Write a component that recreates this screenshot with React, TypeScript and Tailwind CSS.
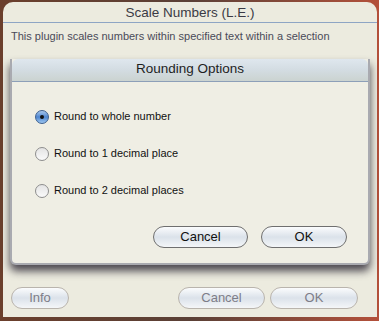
import React, { useState } from "react";

const font = { fontFamily: '"Lucida Grande", "Liberation Sans", Arial, sans-serif' };

function AquaButton({ label, width, disabled }: { label: string; width: string; disabled?: boolean }) {
  return (
    <button
      className={`${width} h-[22px] rounded-full border text-[13px] leading-none bg-linear-to-b from-[#fbfcfd] via-[#dbe2ea] to-[#f4f6f8] ${
        disabled ? "border-[#b9b4ad] text-[#7d7d88]" : "border-[#6f6f6f] text-[#111]"
      }`}
    >
      {label}
    </button>
  );
}

function Radio({ checked, label, onClick }: { checked: boolean; label: string; onClick: () => void }) {
  return (
    <label className="h-[16px] flex items-center gap-[5px] cursor-default" onClick={onClick}>
      {checked ? (
        <span className="w-[14px] h-[14px] rounded-full border border-[#3d5f8f] bg-linear-to-b from-[#a9c8ec] via-[#4f86cf] to-[#9cc6f0] flex items-center justify-center">
          <span className="w-[4px] h-[4px] rounded-full bg-[#111]" />
        </span>
      ) : (
        <span className="w-[14px] h-[14px] rounded-full border border-[#8d8d8d] bg-linear-to-b from-[#e4e4e4] to-[#fafafa]" />
      )}
      <span className="text-[11px] text-[#111]">{label}</span>
    </label>
  );
}

export default function App() {
  const [choice, setChoice] = useState(0);
  const options = ["Round to whole number", "Round to 1 decimal place", "Round to 2 decimal places"];

  return (
    <div className="w-[379px] h-[321px] overflow-hidden bg-linear-to-r from-[#6b3f2c] via-[#5a4036] to-[#b3503a] pt-[2px] pl-[3px]" style={font}>
      {/* ── Main window ── */}
      <div className="w-[374px] h-[315px] rounded-t-[10px] bg-[#ecebdf] flex flex-col">
        <div className="h-[21px] flex items-center justify-center text-[13.5px] text-[#3a3a44] border-b border-[#8ea5c4] pt-[2px]">
          Scale Numbers (L.E.)
        </div>
        <p className="pl-[8px] pt-[5px] text-[11px] text-[#4a4a58]">
          This plugin scales numbers within specified text within a selection
        </p>

        {/* ── Sheet ── */}
        <div className="mt-[14px] ml-[7px] w-[360px] h-[206px] bg-[#efeee4] rounded-b-[6px] border-x-[2px] border-b-[2px] border-[#a9aab0] shadow-[0_6px_8px_rgba(20,15,30,0.75)] flex flex-col">
          <div className="h-[23px] rounded-t-[6px] bg-linear-to-b from-[#dfe7ee] via-[#d3dce2] to-[#cbd3d0] border-b border-[#8d9fb8] flex items-center justify-center text-[13.5px] text-[#1e1e1e]">
            Rounding Options
          </div>
          <div className="flex flex-col gap-[21px] pl-[23px] pt-[27px]">
            {options.map((o, i) => (
              <Radio key={o} label={o} checked={choice === i} onClick={() => setChoice(i)} />
            ))}
          </div>
          <div className="flex justify-end gap-[13px] pr-[21px] mt-[27px]">
            <AquaButton label="Cancel" width="w-[95px]" />
            <AquaButton label="OK" width="w-[86px]" />
          </div>
        </div>

        {/* ── Bottom buttons ── */}
        <div className="flex items-center mt-[22px] px-[8px]">
          <AquaButton label="Info" width="w-[58px]" disabled />
          <div className="flex-1" />
          <AquaButton label="Cancel" width="w-[87px]" disabled />
          <div className="w-[5px]" />
          <AquaButton label="OK" width="w-[88px]" disabled />
          <div className="w-[11px]" />
        </div>
      </div>
    </div>
  );
}
